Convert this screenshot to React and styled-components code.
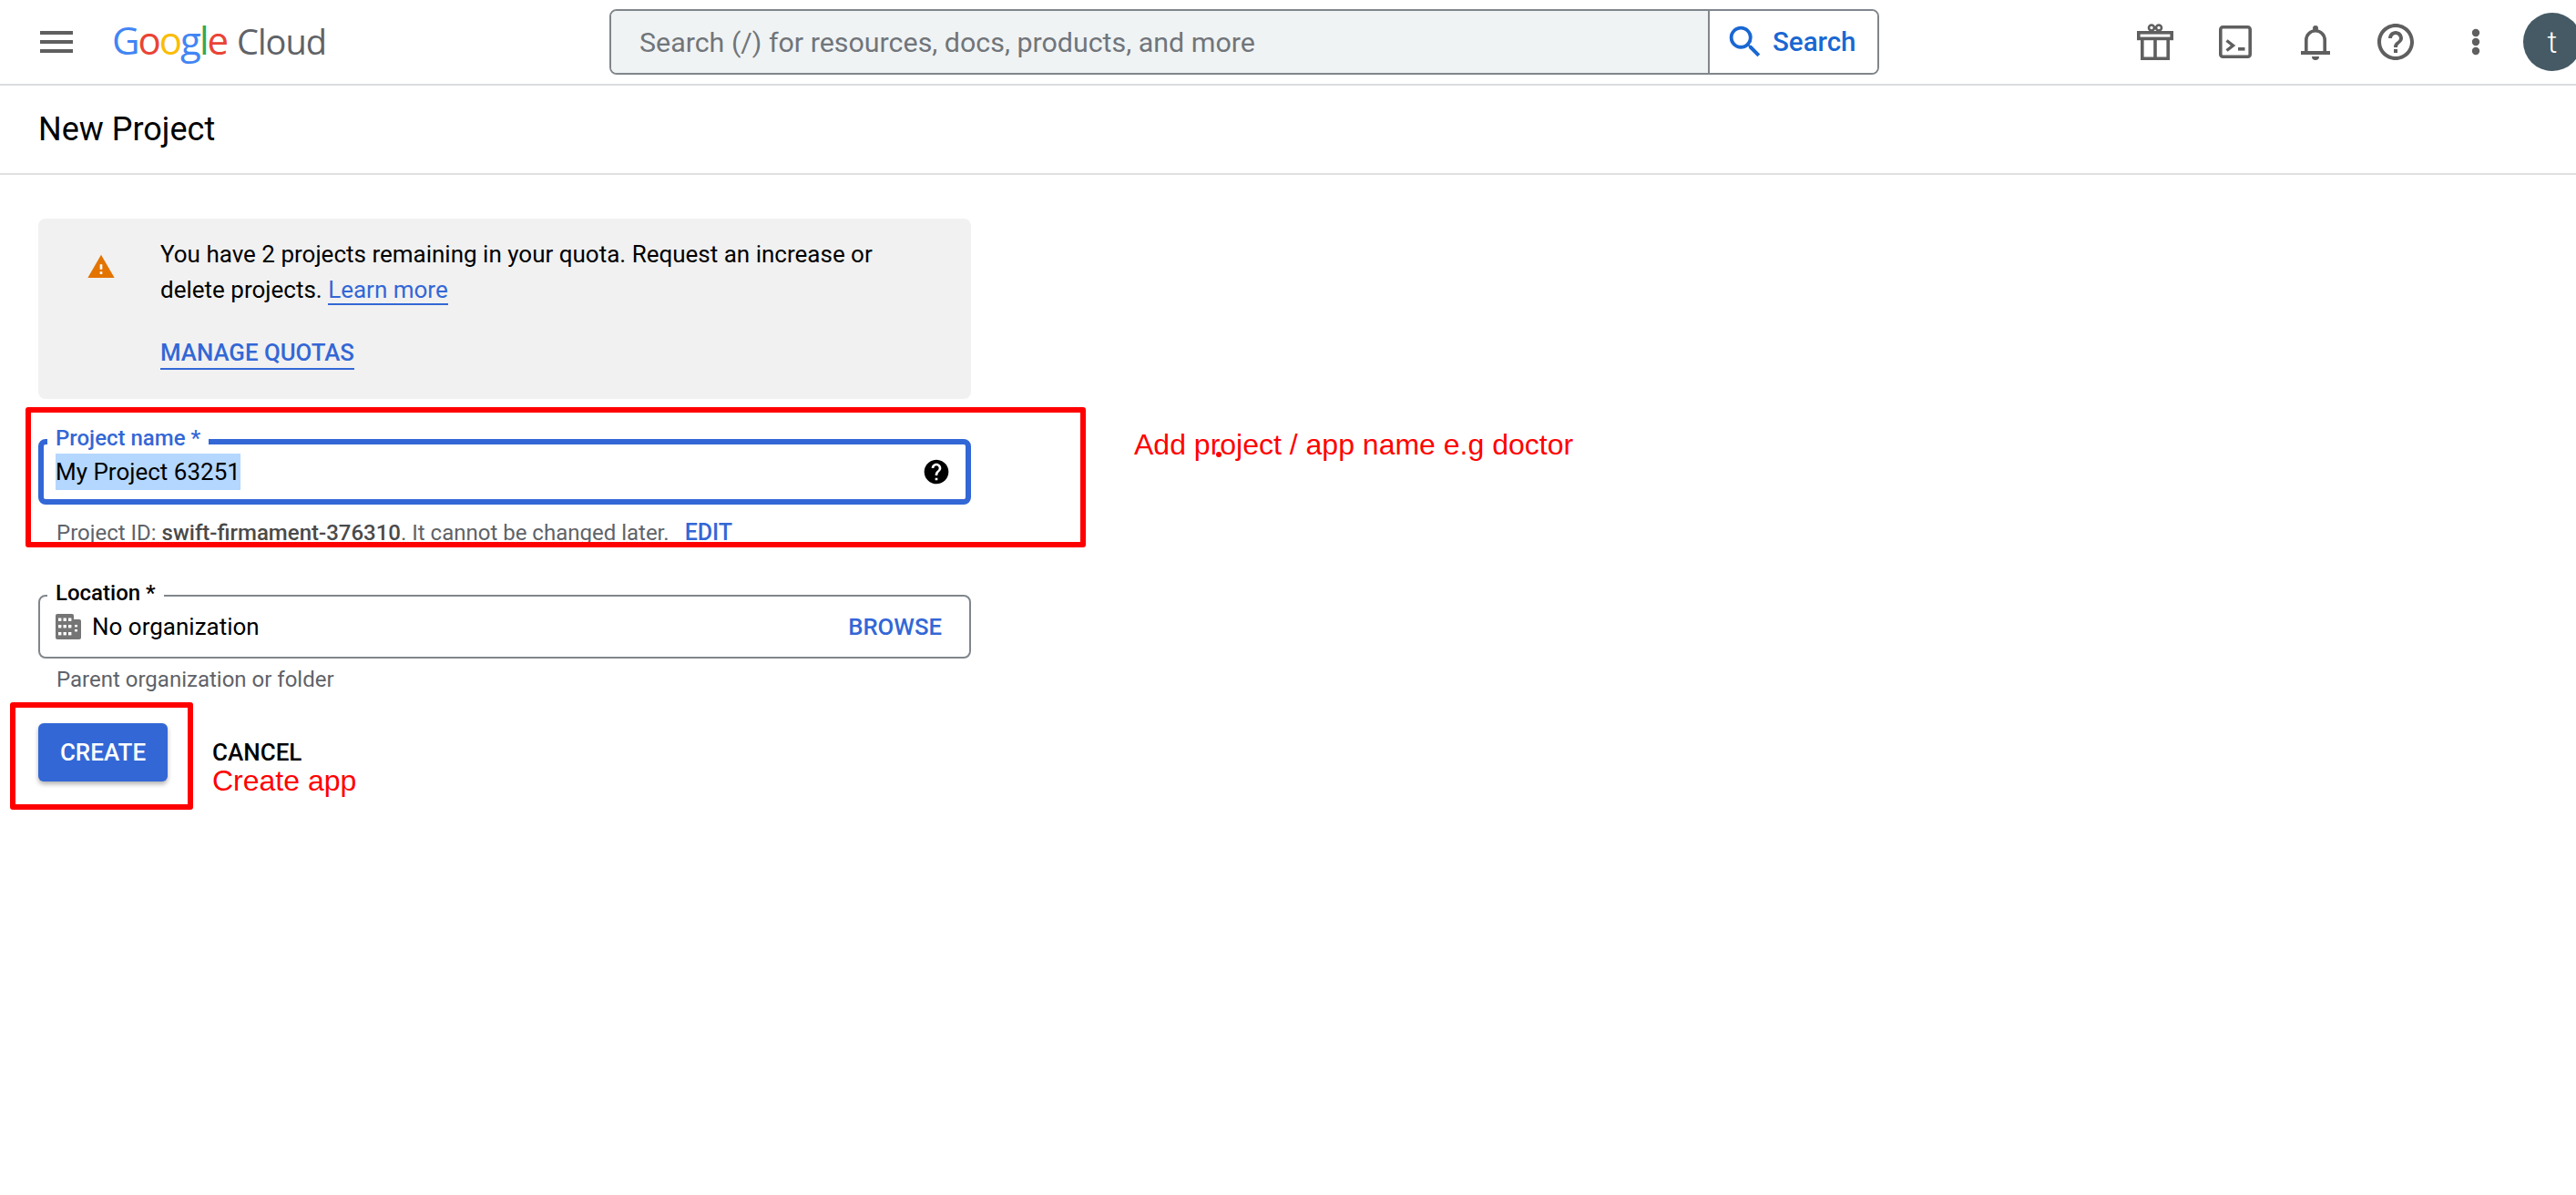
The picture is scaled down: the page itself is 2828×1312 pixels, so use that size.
import React from 'react'
import styled, { createGlobalStyle } from 'styled-components'

const GlobalStyle = createGlobalStyle`
html, body {
  margin: 0;
  background: #fff;
  overflow: hidden;
}
* { box-sizing: border-box; }
body {
  font-family: Roboto, "Liberation Sans", sans-serif;
  color: #000;
}
`

function GiftIcon() {
  return (
    <svg width="48" height="48" viewBox="0 0 48 48" fill="none" stroke="#5f5f5f" strokeWidth="3.6">
      <rect x="5.8" y="13.8" width="36.4" height="6.6" />
      <path d="M9.8 20v22.2h28.4V20M24 20v22" />
      <circle cx="20" cy="8.5" r="3" strokeWidth="2.6" />
      <circle cx="28" cy="8.5" r="3" strokeWidth="2.6" />
    </svg>
  )
}

function TerminalIcon() {
  return (
    <svg width="48" height="48" viewBox="0 0 48 48" fill="none">
      <rect x="7.8" y="7.8" width="32.4" height="32.4" rx="2.5" stroke="#5f5f5f" strokeWidth="3.6" />
      <path d="M14.5 22.5l7 5.5-7 5.5" stroke="#5f5f5f" strokeWidth="3.4" />
      <rect x="27" y="30" width="7.5" height="3.6" fill="#5f5f5f" />
    </svg>
  )
}

function BellIcon() {
  return (
    <svg width="48" height="48" viewBox="0 0 48 48" fill="none">
      <path d="M13.8 36V22a10.2 10.2 0 0 1 20.4 0v14" stroke="#5f5f5f" strokeWidth="3.6" />
      <circle cx="24" cy="9" r="3" fill="#5f5f5f" />
      <rect x="8" y="34" width="32" height="4" fill="#5f5f5f" />
      <path d="M20 40h8a4 4 0 0 1-8 0z" fill="#5f5f5f" />
    </svg>
  )
}

function HelpOutlineIcon() {
  return (
    <svg width="48" height="48" viewBox="0 0 24 24" fill="#5f5f5f">
      <path d="M11 18h2v-2h-2v2zm1-16C6.48 2 2 6.48 2 12s4.48 10 10 10 10-4.48 10-10S17.52 2 12 2zm0 18c-4.41 0-8-3.59-8-8s3.59-8 8-8 8 3.59 8 8-3.59 8-8 8zm0-14c-2.21 0-4 1.79-4 4h2c0-1.1.9-2 2-2s2 .9 2 2c0 2-3 1.75-3 5h2c0-2.25 3-2.5 3-5 0-2.21-1.79-4-4-4z" />
    </svg>
  )
}

function MoreIcon() {
  return (
    <svg width="48" height="48" viewBox="0 0 48 48" fill="#5f5f5f">
      <circle cx="24" cy="14" r="4.2" />
      <circle cx="24" cy="24" r="4.2" />
      <circle cx="24" cy="34" r="4.2" />
    </svg>
  )
}

function BuildingIcon() {
  return (
    <svg width="28" height="28" viewBox="0 0 28 28">
      <rect x="0" y="0" width="20" height="28" rx="2" fill="#757575" />
      <rect x="14" y="6" width="14" height="22" rx="2" fill="#757575" />
      {[3, 8.5, 14].map((x) =>
        [4.5, 12, 20].map((y) => <rect key={x + '-' + y} x={x} y={y} width="3.4" height="3.4" fill="#fff" />)
      )}
      <rect x="21" y="12" width="3" height="2.4" fill="#fff" />
      <rect x="21" y="17" width="3" height="2.4" fill="#fff" />
    </svg>
  )
}

function App() {
  return (
    <Page>
      <GlobalStyle />
      <TopBar>
        <MenuButton>
          <svg width="48" height="48" viewBox="0 0 24 24" fill="#5f5f5f">
            <path d="M3 18h18v-2H3v2zm0-5h18v-2H3v2zm0-7v2h18V6H3z" />
          </svg>
        </MenuButton>
        <Logo>
          <Word>
            <Letter $c="#4285f4">G</Letter>
            <Letter $c="#ea4335">o</Letter>
            <Letter $c="#fbbc04">o</Letter>
            <Letter $c="#4285f4">g</Letter>
            <Letter $c="#34a853">l</Letter>
            <Letter $c="#ea4335">e</Letter>
          </Word>
          <Cloud>Cloud</Cloud>
        </Logo>
        <SearchBar>
          <SearchInput>Search (/) for resources, docs, products, and more</SearchInput>
          <SearchButton>
            <svg width="46" height="46" viewBox="0 0 24 24" fill="#1967d2">
              <path d="M15.5 14h-.79l-.28-.27A6.471 6.471 0 0 0 16 9.5 6.5 6.5 0 1 0 9.5 16c1.61 0 3.09-.59 4.23-1.57l.27.28v.79l5 4.99L20.49 19l-4.99-5zm-6 0C7.01 14 5 11.99 5 9.5S7.01 5 9.5 5 14 7.01 14 9.5 11.99 14 9.5 14z" />
            </svg>
            <span>Search</span>
          </SearchButton>
        </SearchBar>
        <Tools>
          <GiftIcon />
          <TerminalIcon />
          <BellIcon />
          <HelpOutlineIcon />
          <MoreIcon />
        </Tools>
        <Avatar>t</Avatar>
      </TopBar>

      <SubBar>New Project</SubBar>

      <Content>
        <Quota>
          <QuotaIcon>
            <svg width="32" height="32" viewBox="0 0 24 24">
              <path fill="#e37400" d="M1 21h22L12 2 1 21z" />
              <path fill="#fff" d="M13 18h-2v-2h2v2zm0-4h-2v-4h2v4z" />
            </svg>
          </QuotaIcon>
          <QuotaBody>
            <QuotaText>You have 2 projects remaining in your quota. Request an increase or</QuotaText>
            <QuotaText>
              delete projects. <TextLink>Learn more</TextLink>
            </QuotaText>
            <ManageLink>MANAGE QUOTAS</ManageLink>
          </QuotaBody>
        </Quota>

        <NameSection>
          <FieldBox $active>
            <FieldLabel $active>Project name *</FieldLabel>
            <Selected>My Project 63251</Selected>
            <svg width="32" height="32" viewBox="0 0 24 24" fill="#000">
              <path d="M12 2C6.48 2 2 6.48 2 12s4.48 10 10 10 10-4.48 10-10S17.52 2 12 2zm1 17h-2v-2h2v2zm2.07-7.75l-.9.92C13.45 12.9 13 13.5 13 15h-2v-.5c0-1.1.45-2.1 1.17-2.83l1.24-1.26c.37-.36.59-.86.59-1.41 0-1.1-.9-2-2-2s-2 .9-2 2H8c0-2.21 1.79-4 4-4s4 1.79 4 4c0 .88-.36 1.68-.93 2.25z" />
            </svg>
          </FieldBox>
          <Helper>
            Project ID: <Strong>swift-firmament-376310</Strong>. It cannot be changed later.
            <EditLink>EDIT</EditLink>
          </Helper>
          <NameMark />
          <NameNote>
            Add project / app name e.g doctor
            <NoteDot />
          </NameNote>
        </NameSection>

        <LocationSection>
          <FieldBox>
            <FieldLabel>Location *</FieldLabel>
            <OrgName>
              <BuildingIcon />
              <span>No organization</span>
            </OrgName>
            <BrowseLink>BROWSE</BrowseLink>
          </FieldBox>
          <Helper $tight>Parent organization or folder</Helper>
        </LocationSection>

        <Actions>
          <CreateWrap>
            <CreateButton>CREATE</CreateButton>
            <CreateMark />
          </CreateWrap>
          <CancelColumn>
            <CancelText>CANCEL</CancelText>
            <CreateNote>Create app</CreateNote>
          </CancelColumn>
        </Actions>
      </Content>
    </Page>
  )
}

export default App

const Page = styled.div`
width: 2828px;
height: 1312px;
overflow: hidden;
background: #fff;
`

const TopBar = styled.div`
height: 94px;
display: flex;
align-items: center;
padding-left: 38px;
border-bottom: 2px solid #dadce0;
overflow: hidden;
`

const MenuButton = styled.div`
width: 48px;
height: 48px;
flex-shrink: 0;
`

const Logo = styled.div`
display: flex;
align-items: baseline;
gap: 11px;
margin: -4px 0 0 37px;
width: 233px;
flex-shrink: 0;
`

const Word = styled.div`
font-family: "Open Sans", Roboto, sans-serif;
font-size: 42px;
font-weight: 500;
letter-spacing: -2px;
line-height: 48px;
`

const Letter = styled.span`
color: ${(p) => p.$c};
`

const Cloud = styled.div`
font-family: "Open Sans", Roboto, sans-serif;
font-size: 38px;
color: #5f6368;
letter-spacing: -1px;
line-height: 48px;
`

const SearchBar = styled.div`
width: 1394px;
height: 72px;
margin-left: 313px;
display: flex;
border: 2px solid #80868b;
border-radius: 8px;
overflow: hidden;
flex-shrink: 0;
`

const SearchInput = styled.div`
flex: 1;
background: #f0f3f4;
border-right: 2px solid #80868b;
padding-left: 31px;
display: flex;
align-items: center;
font-size: 30.4px;
color: #70757a;
`

const SearchButton = styled.div`
width: 184px;
display: flex;
align-items: center;
padding-left: 16px;
gap: 7px;
background: #fff;
color: #1967d2;
font-size: 29.5px;
font-weight: 500;
`

const Tools = styled.div`
display: flex;
align-items: center;
gap: 40px;
margin-left: 279px;
flex-shrink: 0;
`

const Avatar = styled.div`
width: 64px;
height: 64px;
margin-left: 28px;
flex-shrink: 0;
border-radius: 50%;
background: #455a64;
color: #fff;
font-size: 34px;
font-weight: 300;
display: flex;
align-items: center;
justify-content: center;
`

const SubBar = styled.div`
height: 98px;
padding-left: 42px;
display: flex;
align-items: center;
border-bottom: 2px solid #e0e0e0;
font-size: 36px;
color: #000;
`

const Content = styled.div`
width: 1066px;
padding: 48px 0 0 42px;
`

const Quota = styled.div`
height: 198px;
display: flex;
background: #f1f1f1;
border-radius: 8px;
padding: 20px 0 0 53px;
`

const QuotaIcon = styled.div`
width: 81px;
padding-top: 17px;
flex-shrink: 0;
`

const QuotaBody = styled.div`
width: 820px;
`

const QuotaText = styled.div`
font-size: 26px;
line-height: 39px;
color: #000;
`

const TextLink = styled.span`
color: #3367d6;
border-bottom: 2px solid #3367d6;
`

const ManageLink = styled.div`
display: inline-block;
margin-top: 33px;
font-size: 25.8px;
font-weight: 500;
line-height: 33px;
color: #3367d6;
border-bottom: 2px solid #3367d6;
`

const NameSection = styled.div`
position: relative;
margin-top: 44px;
`

const FieldBox = styled.div`
position: relative;
height: ${(p) => (p.$active ? '72px' : '70px')};
display: flex;
align-items: center;
justify-content: space-between;
padding: ${(p) => (p.$active ? '0 16px 0 13px' : '0 30px 0 17px')};
border: ${(p) => (p.$active ? '6px solid #3367d6' : '2px solid #80868b')};
border-radius: 8px;
`

const FieldLabel = styled.div`
position: absolute;
left: ${(p) => (p.$active ? '4px' : '8px')};
top: ${(p) => (p.$active ? '-23px' : '-20px')};
padding: 0 9px;
background: #fff;
font-size: 24px;
font-weight: 500;
line-height: 32px;
color: ${(p) => (p.$active ? '#3367d6' : '#000')};
`

const Selected = styled.span`
display: inline-block;
height: 40px;
line-height: 40px;
background: #b4d7ff;
font-size: 26px;
color: #000;
`

const Helper = styled.div`
margin-top: ${(p) => (p.$tight ? '8px' : '16px')};
padding-left: 20px;
font-size: 24px;
line-height: 30px;
color: #5f6368;
`

const Strong = styled.span`
font-weight: 500;
color: #4a4a4a;
`

const EditLink = styled.span`
margin-left: 17px;
font-size: 25px;
font-weight: 500;
color: #3367d6;
`

const NameMark = styled.div`
position: absolute;
left: -14px;
top: -35px;
width: 1164px;
height: 154px;
border: 6px solid #f00;
border-radius: 3px;
`

const NameNote = styled.div`
position: absolute;
left: 1203px;
top: -13px;
font-family: "Liberation Sans", Arial, sans-serif;
font-size: 32px;
line-height: 38px;
color: #f00;
white-space: nowrap;
`

const NoteDot = styled.span`
position: absolute;
left: 90px;
top: 27px;
width: 6px;
height: 6px;
border-radius: 50%;
background: #f00;
`

const LocationSection = styled.div`
margin-top: 53px;
`

const OrgName = styled.div`
display: flex;
align-items: center;
gap: 12px;
font-size: 26px;
color: #000;
`

const BrowseLink = styled.div`
font-size: 25.7px;
font-weight: 500;
color: #3367d6;
`

const Actions = styled.div`
display: flex;
margin-top: 33px;
`

const CreateWrap = styled.div`
position: relative;
`

const CreateButton = styled.div`
width: 142px;
height: 64px;
display: flex;
align-items: center;
justify-content: center;
background: #3367d6;
border-radius: 6px;
box-shadow: 0 3px 5px rgba(0, 0, 0, 0.3);
color: #fff;
font-size: 26px;
font-weight: 500;
`

const CreateMark = styled.div`
position: absolute;
left: -31px;
top: -23px;
width: 201px;
height: 118px;
border: 6px solid #f00;
border-radius: 3px;
`

const CancelColumn = styled.div`
margin-left: 49px;
padding-top: 17px;
`

const CancelText = styled.div`
font-size: 26px;
font-weight: 500;
line-height: 30px;
color: #000;
`

const CreateNote = styled.div`
font-family: "Liberation Sans", Arial, sans-serif;
font-size: 32px;
line-height: 32px;
color: #f00;
`
